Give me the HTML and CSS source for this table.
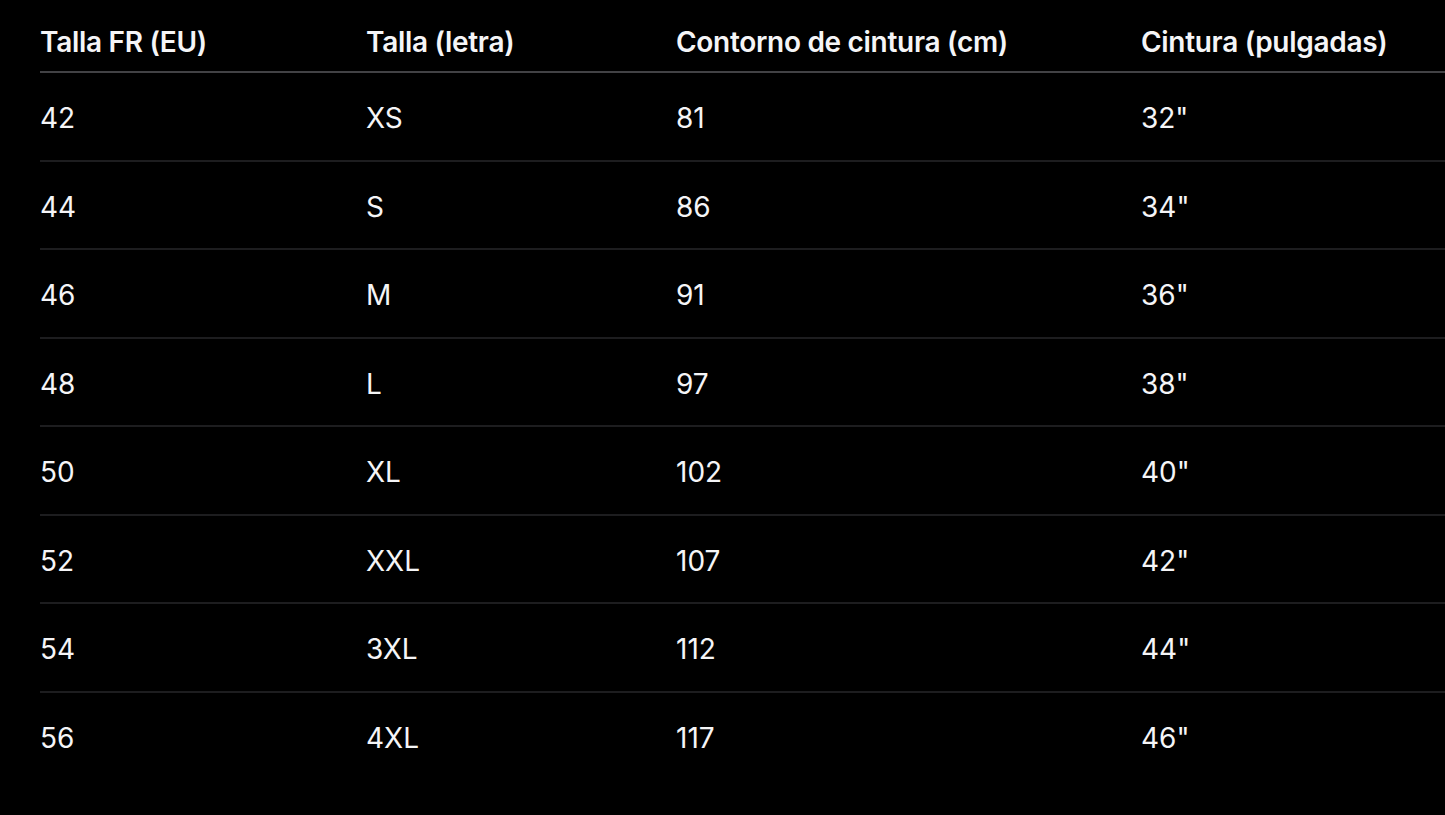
FILE: index.html
```html
<!DOCTYPE html>
<html lang="es">
<head>
    <meta charset="UTF-8">
    <title>Guía de tallas</title>
    <link rel="stylesheet" href="styles.css">
</head>
<body>
    <div class="tabla-wrap">
        <table class="tallas">
            <thead>
                <tr>
                    <th class="c1">Talla FR (EU)</th>
                    <th class="c2">Talla (letra)</th>
                    <th class="c3">Contorno de cintura (cm)</th>
                    <th class="c4">Cintura (pulgadas)</th>
                </tr>
            </thead>
            <tbody>
                <tr><td>42</td><td>XS</td><td>81</td><td>32"</td></tr>
                <tr><td>44</td><td>S</td><td>86</td><td>34"</td></tr>
                <tr><td>46</td><td>M</td><td>91</td><td>36"</td></tr>
                <tr><td>48</td><td>L</td><td>97</td><td>38"</td></tr>
                <tr><td>50</td><td>XL</td><td>102</td><td>40"</td></tr>
                <tr><td>52</td><td>XXL</td><td>107</td><td>42"</td></tr>
                <tr><td>54</td><td>3XL</td><td>112</td><td>44"</td></tr>
                <tr><td>56</td><td>4XL</td><td>117</td><td>46"</td></tr>
            </tbody>
        </table>
    </div>
</body>
</html>
```

FILE: styles.css
```css
html, body { margin: 0; background: #000; }
body { font-family: Inter, "Noto Sans", sans-serif; color: #f5f5f7; overflow: hidden; }
.tabla-wrap { padding-left: 40px; }
.tallas { border-collapse: collapse; table-layout: fixed; width: 1480px; font-size: 28px; line-height: 34px; }
.tallas th, .tallas td { text-align: left; padding: 0; vertical-align: middle; }
.tallas th { font-weight: 600; letter-spacing: -0.3px; height: 72px; padding-top: 12px; box-sizing: border-box; border-bottom: 2px solid #424245; }
.tallas td { font-weight: 400; height: 82.5px; padding-top: 4px; border-bottom: 2px solid #1d1d1f; }
.tallas tbody tr:last-child td { border-bottom: none; }
.c1 { width: 326px; }
.c2 { width: 310px; }
.c3 { width: 465px; }
```
